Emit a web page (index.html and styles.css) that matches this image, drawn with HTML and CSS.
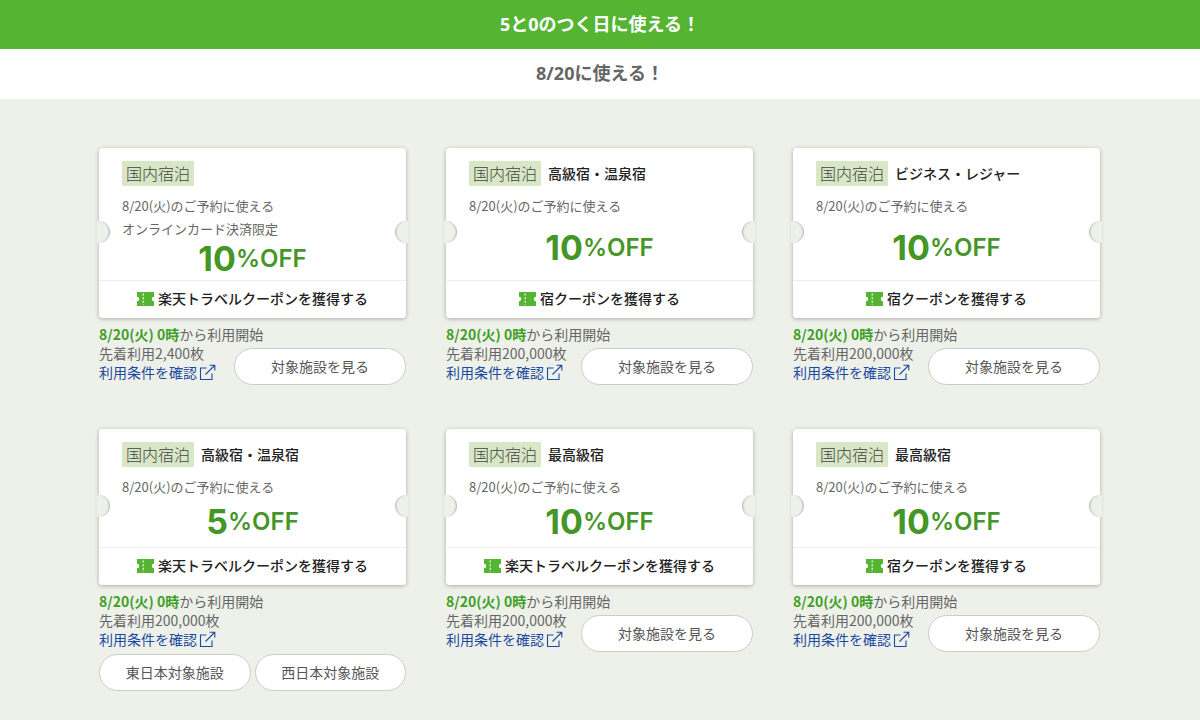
FILE: index.html
```html
<!DOCTYPE html>
<html lang="ja">
<head>
<meta charset="utf-8">
<meta name="viewport" content="width=device-width, initial-scale=1">
<title>5と0のつく日に使える！</title>
<link rel="stylesheet" href="styles.css">
</head>
<body>
<svg class="sprite" aria-hidden="true">
  <symbol id="ticket" viewBox="0 0 17 14">
    <path fill="currentColor" d="M0 0H17V4.8A2.2 2.2 0 0 0 17 9.2V14H0V9.2A2.2 2.2 0 0 0 0 4.8Z"/>
    <path stroke="#fff" stroke-width="1.1" stroke-dasharray="2 1.6" d="M6.2 1.6V13"/>
  </symbol>
  <symbol id="external" viewBox="0 0 17 17">
    <path fill="none" stroke="currentColor" stroke-width="1.1" d="M7.5 4H1.5V15.5H13V9.5M6.5 10.5L15.5 1.5M10.5 1.2H15.8V6.5"/>
  </symbol>
</svg>
<header>
  <h1 class="banner">5と0のつく日に使える！</h1>
  <h2 class="date">8/20に使える！</h2>
</header>
<main class="coupons">
  <article class="coupon">
    <div class="card">
      <div class="card-body">
        <h3 class="heading"><span class="tag">国内宿泊</span></h3>
        <p class="terms">8/20(火)のご予約に使える<br>オンラインカード決済限定</p>
        <p class="price"><span class="number">10</span>%OFF</p>
      </div>
      <button class="get" type="button"><svg class="ticket"><use href="#ticket"/></svg>楽天トラベルクーポンを獲得する</button>
    </div>
    <p class="start"><strong>8/20(火) 0時</strong>から利用開始</p>
    <div class="details">
      <div>
        <p>先着利用2,400枚</p>
        <a class="conditions" href="#">利用条件を確認<svg class="external"><use href="#external"/></svg></a>
      </div>
      <a class="pill" href="#">対象施設を見る</a>
    </div>
  </article>
  <article class="coupon">
    <div class="card">
      <div class="card-body">
        <h3 class="heading"><span class="tag">国内宿泊</span>高級宿・温泉宿</h3>
        <p class="terms">8/20(火)のご予約に使える</p>
        <p class="price"><span class="number">10</span>%OFF</p>
      </div>
      <button class="get" type="button"><svg class="ticket"><use href="#ticket"/></svg>宿クーポンを獲得する</button>
    </div>
    <p class="start"><strong>8/20(火) 0時</strong>から利用開始</p>
    <div class="details">
      <div>
        <p>先着利用200,000枚</p>
        <a class="conditions" href="#">利用条件を確認<svg class="external"><use href="#external"/></svg></a>
      </div>
      <a class="pill" href="#">対象施設を見る</a>
    </div>
  </article>
  <article class="coupon">
    <div class="card">
      <div class="card-body">
        <h3 class="heading"><span class="tag">国内宿泊</span>ビジネス・レジャー</h3>
        <p class="terms">8/20(火)のご予約に使える</p>
        <p class="price"><span class="number">10</span>%OFF</p>
      </div>
      <button class="get" type="button"><svg class="ticket"><use href="#ticket"/></svg>宿クーポンを獲得する</button>
    </div>
    <p class="start"><strong>8/20(火) 0時</strong>から利用開始</p>
    <div class="details">
      <div>
        <p>先着利用200,000枚</p>
        <a class="conditions" href="#">利用条件を確認<svg class="external"><use href="#external"/></svg></a>
      </div>
      <a class="pill" href="#">対象施設を見る</a>
    </div>
  </article>
  <article class="coupon">
    <div class="card">
      <div class="card-body">
        <h3 class="heading"><span class="tag">国内宿泊</span>高級宿・温泉宿</h3>
        <p class="terms">8/20(火)のご予約に使える</p>
        <p class="price"><span class="number">5</span>%OFF</p>
      </div>
      <button class="get" type="button"><svg class="ticket"><use href="#ticket"/></svg>楽天トラベルクーポンを獲得する</button>
    </div>
    <p class="start"><strong>8/20(火) 0時</strong>から利用開始</p>
    <div class="details">
      <div>
        <p>先着利用200,000枚</p>
        <a class="conditions" href="#">利用条件を確認<svg class="external"><use href="#external"/></svg></a>
      </div>
    </div>
    <div class="regions">
      <a class="pill" href="#">東日本対象施設</a>
      <a class="pill" href="#">西日本対象施設</a>
    </div>
  </article>
  <article class="coupon">
    <div class="card">
      <div class="card-body">
        <h3 class="heading"><span class="tag">国内宿泊</span>最高級宿</h3>
        <p class="terms">8/20(火)のご予約に使える</p>
        <p class="price"><span class="number">10</span>%OFF</p>
      </div>
      <button class="get" type="button"><svg class="ticket"><use href="#ticket"/></svg>楽天トラベルクーポンを獲得する</button>
    </div>
    <p class="start"><strong>8/20(火) 0時</strong>から利用開始</p>
    <div class="details">
      <div>
        <p>先着利用200,000枚</p>
        <a class="conditions" href="#">利用条件を確認<svg class="external"><use href="#external"/></svg></a>
      </div>
      <a class="pill" href="#">対象施設を見る</a>
    </div>
  </article>
  <article class="coupon">
    <div class="card">
      <div class="card-body">
        <h3 class="heading"><span class="tag">国内宿泊</span>最高級宿</h3>
        <p class="terms">8/20(火)のご予約に使える</p>
        <p class="price"><span class="number">10</span>%OFF</p>
      </div>
      <button class="get" type="button"><svg class="ticket"><use href="#ticket"/></svg>宿クーポンを獲得する</button>
    </div>
    <p class="start"><strong>8/20(火) 0時</strong>から利用開始</p>
    <div class="details">
      <div>
        <p>先着利用200,000枚</p>
        <a class="conditions" href="#">利用条件を確認<svg class="external"><use href="#external"/></svg></a>
      </div>
      <a class="pill" href="#">対象施設を見る</a>
    </div>
  </article>
</main>
</body>
</html>
```

FILE: styles.css
```css
* {
  box-sizing: border-box;
}

body {
  margin: 0;
  background: #eef1ea;
  color: #666;
  font: 14px/19px "Noto Sans CJK JP", sans-serif;
}

h1, h2, h3, p {
  margin: 0;
}

a {
  text-decoration: none;
}

.sprite {
  display: none;
}

.banner,
.date {
  padding: 12px 0;
  font: bold 18px/25px "Noto Sans", "Noto Sans CJK JP", sans-serif;
  text-align: center;
}

.banner {
  background: #55b533;
  color: #fff;
}

.date {
  padding-bottom: 13px;
  background: #fff;
}

.coupons {
  display: grid;
  grid-template-columns: repeat(3, minmax(0, 1fr));
  gap: 44px 40px;
  padding: 49px 100px 28px 99px;
}

.coupon {
  display: flex;
  flex-direction: column;
}

.card {
  position: relative;
  display: flex;
  flex-direction: column;
  min-height: 156px;
  margin-bottom: 7px;
  border-radius: 4px;
  background: #fff;
  box-shadow: 0 1px 4px rgba(0, 0, 0, .3);
}

.coupon:nth-child(-n+3) .card {
  min-height: 170px;
}

/* Half-round notches cut into both edges of the ticket */
.card::before,
.card::after {
  content: "";
  position: absolute;
  top: 50%;
  width: 13px;
  height: 22px;
  margin-top: -12px;
  background: #eef1ea;
}

.card::before {
  left: -2px;
  border-radius: 0 11px 11px 0;
  box-shadow: inset -2px 0 2px -1px rgba(0, 0, 0, .25);
}

.card::after {
  right: -2px;
  border-radius: 11px 0 0 11px;
  box-shadow: inset 2px 0 2px -1px rgba(0, 0, 0, .25);
}

.card-body {
  flex: 1;
  display: flex;
  flex-direction: column;
  padding: 13px 23px 2px;
}

.heading {
  display: flex;
  align-items: center;
  gap: 7px;
  margin-bottom: 8px;
  color: #222;
  font-size: 14px;
  font-weight: 500;
}

.tag {
  padding: 0 4px;
  border-radius: 1px;
  background: #d8e7c6;
  color: #444;
  font-size: 16px;
  font-weight: 300;
  line-height: 25px;
}

.terms {
  font-size: 13px;
  line-height: 23px;
}

.price {
  display: flex;
  align-items: center;
  justify-content: center;
  margin: auto 0;
  color: #449626;
  font: 600 24px/34px Inter, sans-serif;
}

.number {
  font-size: 34px;
  font-weight: 700;
}

.get {
  display: flex;
  align-items: center;
  justify-content: center;
  gap: 4px;
  height: 38px;
  padding: 0 0 2px;
  border: 0;
  border-top: 1px solid #eee;
  border-radius: 0 0 4px 4px;
  background: #fff;
  color: #222;
  font: 500 14px/19px "Noto Sans CJK JP", sans-serif;
  cursor: pointer;
}

.ticket {
  width: 17px;
  height: 14px;
  color: #55b533;
}

.start strong {
  color: #3f9f25;
}

.details {
  display: flex;
  align-items: flex-start;
  justify-content: space-between;
}

.conditions {
  display: flex;
  align-items: center;
  gap: 2px;
  color: #1d4a9f;
}

.external {
  width: 17px;
  height: 17px;
}

.pill {
  padding: 8px 0;
  border: 1px solid #ccc;
  border-radius: 19px;
  background: #fff;
  color: #555;
  text-align: center;
}

.details .pill {
  width: 172px;
  margin-top: 4px;
}

.regions {
  display: grid;
  grid-template-columns: 1fr 1fr;
  gap: 4px;
  margin-top: 5px;
}
```
